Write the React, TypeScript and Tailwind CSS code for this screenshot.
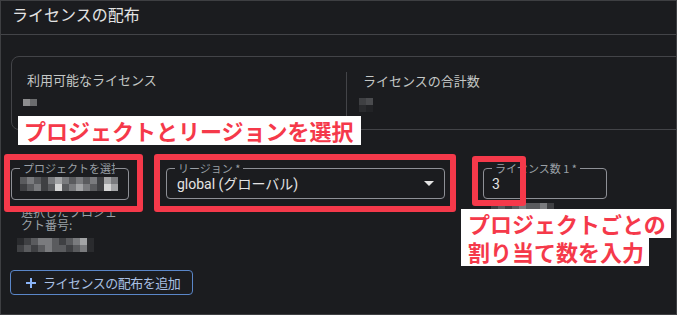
import React from "react";

const FONT = { fontFamily: 'Roboto, "Noto Sans CJK JP", sans-serif' };
const JP = { fontFamily: '"Noto Sans CJK JP", sans-serif' };

function Pix({ rows, size = 7 }: { rows: string[][]; size?: number }) {
  return (
    <div className="flex flex-col">
      {rows.map((r, i) => (
        <div key={i} className="flex">
          {r.map((c, j) => (
            <div key={j} style={{ width: size, height: size, background: c }} />
          ))}
        </div>
      ))}
    </div>
  );
}

function Field({
  label,
  labelWidth,
  className,
  children,
}: {
  label: string;
  labelWidth?: number;
  className: string;
  children?: React.ReactNode;
}) {
  return (
    <div className={`relative border border-[#8e9096] rounded-[4px] ${className}`}>
      <span
        className="absolute -top-[8px] left-[8px] bg-[#1b1c1f] px-[3px] text-[11px] leading-[14px] text-[#9aa0a6] whitespace-nowrap overflow-hidden"
        style={{ ...JP, maxWidth: labelWidth }}
      >
        {label}
      </span>
      {children}
    </div>
  );
}

export default function App() {
  const g1 = "#2a2b2e", g2 = "#3f4043", g3 = "#5a5b5e", g4 = "#7a7b7e", g5 = "#a3a4a6", g6 = "#d6d6d6";
  return (
    <div
      className="relative w-[677px] h-[315px] bg-[#1b1c1f] border border-[#3e3f42] overflow-hidden flex flex-col"
      style={FONT}
    >
      {/* header */}
      <div className="h-[34px] shrink-0 border-b border-[#434448] pl-[11px] pt-[3px]">
        <span className="text-[16px] leading-[20px] text-[#e3e3e3]" style={JP}>
          ライセンスの配布
        </span>
      </div>

      {/* card */}
      <div className="ml-[10px] mt-[21px] w-[720px] h-[74px] shrink-0 border border-[#434448] rounded-[8px] flex">
        <div className="w-[334px] pl-[11px] pt-[14px]">
          <div className="pl-[4px] text-[13px] leading-[18px] text-[#c4c7c5]" style={JP}>
            利用可能なライセンス
          </div>
          <div className="mt-[10px]">
            <Pix rows={[["#8d8d8f", "#6b6c6e"]]} size={7} />
          </div>
        </div>
        <div className="mt-[15px] h-[54px] border-l border-[#434448] pl-[12px]">
          <div className="pl-[4px] text-[13px] leading-[18px] text-[#c4c7c5]" style={JP}>
            ライセンスの合計数
          </div>
          <div className="mt-[8px]">
            <Pix rows={[[g2, "#4a4b4e"], [g1, "#222326"]]} size={7} />
          </div>
        </div>
      </div>

      {/* form row */}
      <div className="mt-[38px] h-[102px] shrink-0 flex items-start">
        <div className="ml-[10px] w-[118px] flex flex-col">
          <Field label="プロジェクトを選択" labelWidth={95} className="w-[118px] h-[32px]">
            <div className="pl-[8px] pt-[8px]">
              <Pix
                size={7}
                rows={[
                  [g3, g4, g3, g2, g4, g5, g4, g3, g4, g3, g4, g2, g5, g4],
                  [g2, g3, g4, g2, g3, g6, g3, g4, g5, g4, g3, g2, g6, g5],
                ]}
              />
            </div>
          </Field>
          <div className="mt-[5px] pl-[10px] text-[12px] leading-[13px] text-[#9aa0a6]" style={JP}>
            <div>選択したプロジェ</div>
            <div>クト番号:</div>
          </div>
          <div className="mt-[7px] pl-[6px]">
            <Pix
              size={7}
              rows={[
                [g1, g2, g3, g4, g4, g3, g2, g3, g4, g5, g1],
                [g2, g3, g2, g3, g4, g3, g3, g2, g3, g4, g1],
              ]}
            />
          </div>
        </div>

        <Field label="リージョン *" className="ml-[37px] w-[279px] h-[31px]">
          <div className="flex items-center h-full pl-[10px] pr-[8px]">
            <span className="text-[14px] leading-[18px] text-[#e3e3e3] pt-[1px]" style={FONT}>
              global (グローバル)
            </span>
            <div className="ml-auto mr-[2px] w-0 h-0 border-l-[5px] border-r-[5px] border-t-[5px] border-l-transparent border-r-transparent border-t-[#e3e3e3]" />
          </div>
        </Field>

        <div className="ml-[38px] flex flex-col">
          <Field label="ライセンス数 1 *" className="w-[124px] h-[31px]">
            <div className="flex items-center h-full pl-[8px]">
              <span className="text-[14px] leading-[18px] text-[#e3e3e3]">3</span>
            </div>
          </Field>
          <div className="mt-[4px] pl-[8px]">
            <Pix size={7} rows={[[g2, g3, g2, g3, g4, g3, g3, g4, g2]]} />
          </div>
        </div>
      </div>

      {/* button */}
      <div className="ml-[9px] w-[183px] h-[25px] border border-[#5a86c8] rounded-[4px] flex items-center pl-[14px]">
        <svg width="12" height="12" viewBox="0 0 12 12" className="shrink-0">
          <path d="M6 1v10M1 6h10" stroke="#8ab4f8" strokeWidth="2" />
        </svg>
        <span className="ml-[6px] text-[13px] leading-[16px] text-[#a9c0e4] tracking-[-0.5px]" style={JP}>
          ライセンスの配布を追加
        </span>
      </div>

      {/* annotations */}
      <div className="absolute left-[153px] top-[153px] w-[302px] h-[58px] border-[6px] border-[#f5394a] rounded-[3px]" />
      <div className="absolute left-[3px] top-[153px] w-[139px] h-[58px] border-[6px] border-[#f5394a] rounded-[3px]" />
      <div className="absolute left-[471px] top-[155px] w-[54px] h-[50px] border-[6px] border-[#f5394a] rounded-[3px]" />

      <div
        className="absolute left-[17px] top-[115px] w-[343px] h-[29px] bg-white pl-[6px] text-[22px] leading-[29px] font-bold text-[#f5394a] whitespace-nowrap"
        style={JP}
      >
        プロジェクトとリージョンを選択
      </div>
      <div
        className="absolute left-[460px] top-[208px] w-[210px] h-[29px] bg-white pl-[7px] text-[22px] leading-[29px] font-bold text-[#f5394a] whitespace-nowrap"
        style={JP}
      >
        プロジェクトごとの
      </div>
      <div
        className="absolute left-[460px] top-[237px] w-[188px] h-[28px] bg-white pl-[7px] text-[22px] leading-[27px] font-bold text-[#f5394a] whitespace-nowrap"
        style={JP}
      >
        割り当て数を入力
      </div>
    </div>
  );
}
